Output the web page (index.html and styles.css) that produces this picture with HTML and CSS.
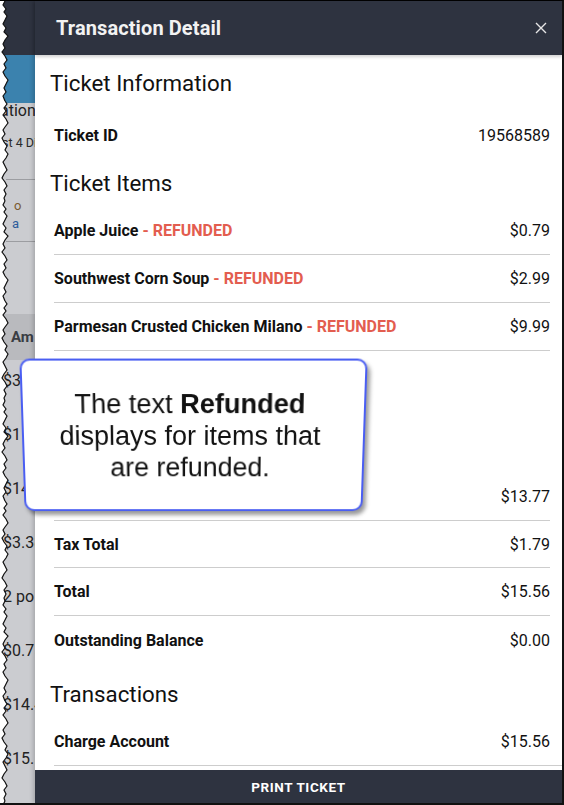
FILE: index.html
```html
<!DOCTYPE html>
<html lang="en">
<head>
<meta charset="utf-8">
<title>Transaction Detail</title>
<link rel="stylesheet" href="styles.css">
</head>
<body>
<div class="frame">
  <div class="app">
    <div class="app-header"></div>
    <div class="app-band"></div>
    <div class="app-body">
      <div class="frag-title">ation</div>
      <div class="frag-sub">st 4 Di</div>
      <div class="app-rule"></div>
      <div class="frag-link">o</div>
      <div class="frag-link second">a</div>
      <div class="app-rule short"></div>
      <div class="app-colhead">Am</div>
      <div class="app-cell">$3</div>
      <div class="app-cell">$1</div>
      <div class="app-cell">$14</div>
      <div class="app-cell">$3.38</div>
      <div class="app-cell">2 po</div>
      <div class="app-cell">$0.75</div>
      <div class="app-cell">$14.4</div>
      <div class="app-cell">$15.5</div>
    </div>
  </div>

  <svg class="tear" width="14" height="805" viewBox="0 0 14 805" aria-hidden="true">
    <defs>
      <g id="segA">
        <path class="tear-fill" d="M0,0 L5,0 L3,4 L6,8 L4,11 L7,15 L5,19 L3,23 L6,27 L4,31 L8,35 L5,39 L3,43 L5,47 L2,51 L5,55 L7,59 L4,63 L6,67 L3,71 L5,75 L8,79 L6,83 L4,87 L6,91 L3,95 L5,100 L0,100 Z"/>
        <path class="tear-line" d="M5,0 L3,4 L6,8 L4,11 L7,15 L5,19 L3,23 L6,27 L4,31 L8,35 L5,39 L3,43 L5,47 L2,51 L5,55 L7,59 L4,63 L6,67 L3,71 L5,75 L8,79 L6,83 L4,87 L6,91 L3,95 L5,100"/>
      </g>
      <g id="segB">
        <path class="tear-fill" d="M0,0 L5,0 L7,3 L4,7 L6,10 L3,14 L6,18 L8,22 L5,26 L3,29 L5,33 L2,37 L4,41 L7,45 L5,49 L8,53 L6,57 L3,61 L5,65 L7,69 L4,73 L2,77 L5,81 L7,85 L4,89 L6,93 L4,97 L5,100 L0,100 Z"/>
        <path class="tear-line" d="M5,0 L7,3 L4,7 L6,10 L3,14 L6,18 L8,22 L5,26 L3,29 L5,33 L2,37 L4,41 L7,45 L5,49 L8,53 L6,57 L3,61 L5,65 L7,69 L4,73 L2,77 L5,81 L7,85 L4,89 L6,93 L4,97 L5,100"/>
      </g>
    </defs>
    <use href="#segA" y="0"/>
    <use href="#segB" y="100"/>
    <use href="#segA" y="200"/>
    <use href="#segB" y="300"/>
    <use href="#segA" y="400"/>
    <use href="#segB" y="500"/>
    <use href="#segA" y="600"/>
    <use href="#segB" y="700"/>
    <use href="#segA" y="800"/>
  </svg>

  <aside class="drawer">
    <header class="drawer-header">
      <h1 class="drawer-title">Transaction Detail</h1>
      <button class="close" type="button" aria-label="Close">
        <svg width="12" height="12" viewBox="0 0 12 12"><path d="M1,1 L11,11 M11,1 L1,11"/></svg>
      </button>
    </header>
    <div class="drawer-body">
      <h2 class="section-title first">Ticket Information</h2>
      <div class="row plain"><span class="label">Ticket ID</span><span class="value">19568589</span></div>

      <h2 class="section-title">Ticket Items</h2>
      <div class="row"><span class="label">Apple Juice <span class="refunded">- REFUNDED</span></span><span class="value">$0.79</span></div>
      <div class="row"><span class="label">Southwest Corn Soup <span class="refunded">- REFUNDED</span></span><span class="value">$2.99</span></div>
      <div class="row"><span class="label">Parmesan Crusted Chicken Milano <span class="refunded">- REFUNDED</span></span><span class="value">$9.99</span></div>

      <div class="row plain gap"><span class="label">Subtotal</span><span class="value">$13.77</span></div>
      <div class="row top-rule"><span class="label">Tax Total</span><span class="value">$1.79</span></div>
      <div class="row"><span class="label">Total</span><span class="value">$15.56</span></div>
      <div class="row plain"><span class="label">Outstanding Balance</span><span class="value">$0.00</span></div>

      <h2 class="section-title tx">Transactions</h2>
      <div class="row wide"><span class="label">Charge Account</span><span class="value">$15.56</span></div>
    </div>
    <footer class="drawer-footer">
      <button class="print" type="button">PRINT TICKET</button>
    </footer>
  </aside>

  <div class="callout">
    <p>The text <b>Refunded</b><br>displays for items that<br>are refunded.</p>
  </div>
</div>
</body>
</html>
```

FILE: styles.css
```css
html, body {
  margin: 0;
  padding: 0;
  background: #ffffff;
}

.frame {
  position: relative;
  width: 564px;
  height: 805px;
  box-sizing: border-box;
  border-top: 1px solid #000000;
  border-right: 2px solid #111111;
  border-bottom: 2px solid #111111;
  overflow: hidden;
  background: #ffffff;
  font-family: Roboto, "Liberation Sans", Arial, sans-serif;
}

/* background application strip (only the part left of the drawer) */
.app {
  display: flex;
  flex-direction: column;
  width: 35px;
  height: 100%;
  overflow: hidden;
}

.app-header {
  flex: 0 0 54px;
  background: #2e3340;
}

.app-band {
  flex: 0 0 48px;
  background: #3b82ae;
}

.app-body {
  flex: 1;
  display: flex;
  flex-direction: column;
  background: #cbccd0;
  padding-left: 2px;
  color: #222222;
  white-space: nowrap;
  overflow: hidden;
}

.frag-title {
  font-size: 16px;
  line-height: 16px;
  margin-left: -2px;
}

.frag-sub {
  font-size: 12.5px;
  line-height: 16px;
  margin-top: 16px;
  color: #2a2a2a;
}

.app-rule {
  flex: 0 0 1px;
  background: #9c9da1;
  margin-top: 28px;
  margin-left: 4px;
}

.app-rule.short {
  margin-top: 9px;
}

.frag-link {
  font-size: 13px;
  line-height: 16px;
  margin-top: 18px;
  padding-left: 12px;
  color: #7a5a30;
}

.frag-link.second {
  margin-top: 2px;
  padding-left: 10px;
  color: #2b5c9b;
}

.app-colhead {
  flex: 0 0 46px;
  margin-top: 72px;
  margin-left: -2px;
  line-height: 46px;
  padding-left: 11px;
  background: #b9babe;
  font-weight: 700;
  font-size: 15px;
  color: #3a3d44;
}

.app-cell {
  flex: 0 0 54px;
  line-height: 42px;
  font-size: 16px;
  padding-left: 1px;
  color: #222222;
}

/* torn edge */
.tear {
  position: absolute;
  left: 0;
  top: 0;
}

.tear-fill {
  fill: #ffffff;
}

.tear-line {
  fill: none;
  stroke: #111111;
  stroke-width: 1.2;
  stroke-linejoin: miter;
}

/* drawer */
.drawer {
  position: absolute;
  top: 0;
  left: 35px;
  right: 0;
  bottom: 0;
  display: flex;
  flex-direction: column;
  background: #ffffff;
  box-shadow: -2px 0 4px rgba(0, 0, 0, 0.18);
}

.drawer-header {
  position: relative;
  z-index: 1;
  flex: 0 0 54px;
  display: flex;
  align-items: center;
  justify-content: space-between;
  padding: 0 15px 0 21px;
  background: #2e3340;
  box-shadow: 0 2px 3px rgba(0, 0, 0, 0.18);
}

.drawer-title {
  margin: 0;
  font-size: 20px;
  font-weight: 700;
  color: #f2f2f2;
  letter-spacing: 0.1px;
}

.close {
  display: flex;
  padding: 0;
  border: 0;
  background: none;
}

.close path {
  stroke: #e6e6e6;
  stroke-width: 1.4;
  fill: none;
}

.drawer-body {
  flex: 1;
  overflow: hidden;
  padding: 0 12px 0 15px;
}

.section-title {
  margin: 0;
  height: 48px;
  display: flex;
  align-items: center;
  font-size: 22.3px;
  font-weight: 400;
  color: #111111;
}

.section-title.first {
  height: 56px;
}

.section-title.tx {
  box-sizing: border-box;
  height: 54px;
  padding-top: 6px;
}

.row {
  box-sizing: border-box;
  height: 48px;
  margin-left: 4px;
  display: flex;
  align-items: center;
  justify-content: space-between;
  border-bottom: 1px solid #cdcdcd;
  font-size: 16px;
  color: #111111;
}

.row.plain {
  border-bottom: 0;
}

.row.gap {
  margin-top: 121px;
}

.row.top-rule {
  border-top: 1px solid #cdcdcd;
  height: 48px;
}

.row.wide {
  margin-right: -12px;
  padding-right: 12px;
}

.label {
  font-weight: 700;
}

.refunded {
  font-weight: 700;
  color: #e35d4f;
}

.value {
  font-weight: 400;
}

.drawer-footer {
  flex: 0 0 33px;
  display: flex;
  align-items: center;
  justify-content: center;
  background: #2e3340;
  margin-top: 4px;
}

.print {
  border: 0;
  background: none;
  padding: 0;
  font-family: Roboto, "Liberation Sans", Arial, sans-serif;
  font-size: 13.5px;
  font-weight: 700;
  letter-spacing: 0.6px;
  color: #ffffff;
}

/* annotation callout */
.callout {
  position: absolute;
  left: 22px;
  top: 358px;
  width: 343px;
  height: 154px;
  box-sizing: border-box;
  display: flex;
  align-items: center;
  justify-content: center;
  padding-right: 7px;
  border: 2px solid #4a5ef2;
  border-radius: 10px;
  background: #ffffff;
  box-shadow: 3px 4px 4px rgba(0, 0, 0, 0.4);
  transform: perspective(700px) rotateX(-8deg);
}

.callout p {
  margin: 0;
  text-align: center;
  font-family: "Liberation Sans", Arial, sans-serif;
  font-size: 27px;
  line-height: 32px;
  color: #111111;
}
```
